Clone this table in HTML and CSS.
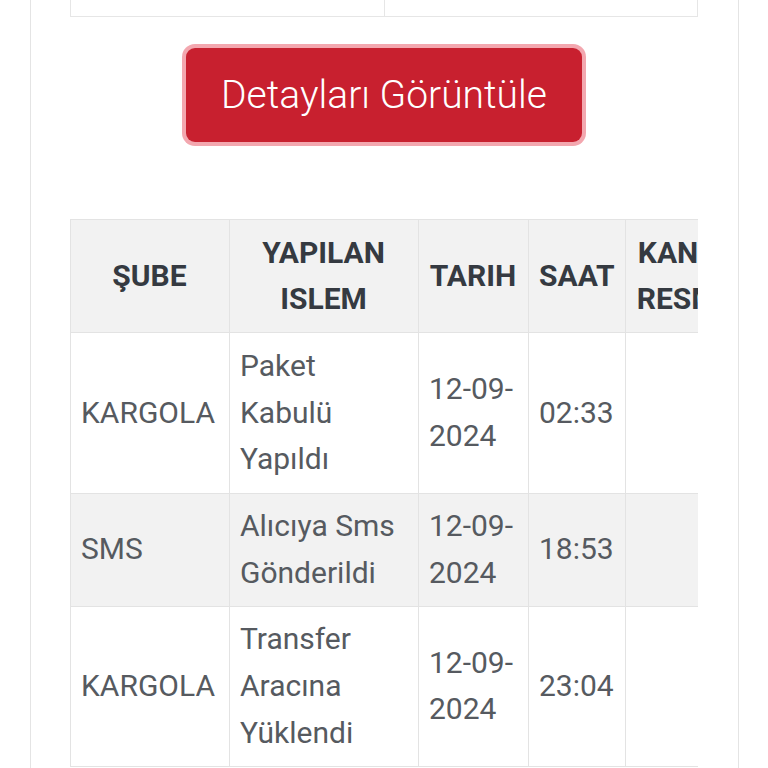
FILE: index.html
```html
<!DOCTYPE html>
<html lang="tr">
<head>
<meta charset="utf-8">
<link rel="stylesheet" href="styles.css">
</head>
<body>
<div class="card">
  <table class="info">
    <tr><td></td><td></td></tr>
  </table>
  <div class="actions">
    <button class="btn-details" type="button">Detayları Görüntüle</button>
  </div>
  <div class="table-wrap">
    <table class="moves">
      <colgroup>
        <col class="c1"><col class="c2"><col class="c3"><col class="c4"><col class="c5">
      </colgroup>
      <thead>
        <tr><th>ŞUBE</th><th>YAPILAN ISLEM</th><th>TARIH</th><th>SAAT</th><th>KANIT RESMI</th></tr>
      </thead>
      <tbody>
        <tr><td>KARGOLA</td><td>Paket Kabulü Yapıldı</td><td>12-09-<br>2024</td><td>02:33</td><td></td></tr>
        <tr class="alt"><td>SMS</td><td>Alıcıya Sms Gönderildi</td><td>12-09-<br>2024</td><td>18:53</td><td></td></tr>
        <tr><td>KARGOLA</td><td>Transfer Aracına Yüklendi</td><td>12-09-<br>2024</td><td>23:04</td><td></td></tr>
      </tbody>
    </table>
  </div>
</div>
</body>
</html>
```
FILE: styles.css
```css
html, body {
  margin: 0;
  padding: 0;
  background: #ffffff;
  font-family: Roboto, "Liberation Sans", sans-serif;
}
.card {
  box-sizing: border-box;
  margin: -43px 0 0 30px;
  width: 709px;
  height: 813px;
  border-left: 1px solid #e4e4e4;
  border-right: 1px solid #e4e4e4;
  padding: 0 40px 0 39px;
  overflow: hidden;
}
.info {
  width: 628px;
  border-collapse: collapse;
}
.info td {
  height: 58px;
  padding: 0;
  border: 1px solid #e6e6e6;
  width: 50%;
}
.actions {
  display: flex;
  justify-content: center;
  padding-top: 31px;
}
.btn-details {
  box-sizing: border-box;
  width: 396px;
  height: 94px;
  background: #c8202f;
  color: #ffffff;
  border: 0;
  border-radius: 9px;
  box-shadow: 0 0 0 4px #f3a7af;
  font-family: Roboto, "Liberation Sans", sans-serif;
  font-weight: 300;
  font-size: 39px;
  padding: 0;
  margin: 0;
}
.table-wrap {
  margin-top: 77px;
  width: 628px;
  overflow: hidden;
}
.moves {
  table-layout: fixed;
  width: 668px;
  border-collapse: collapse;
  font-size: 30px;
  line-height: 46.7px;
}
.c1 { width: 159px; }
.c2 { width: 189px; }
.c3 { width: 110px; }
.c4 { width: 97px; }
.c5 { width: 113px; }
.moves th, .moves td {
  border: 1px solid #e3e3e3;
  padding: 9.5px 11px 9.5px 10px;
  vertical-align: middle;
}
.moves th {
  background: #f2f2f2;
  color: #353a41;
  font-weight: 700;
  text-align: center;
}
.moves td {
  color: #565a60;
  font-weight: 400;
  text-align: left;
}
.moves tr.alt td {
  background: #f2f2f2;
}
```
